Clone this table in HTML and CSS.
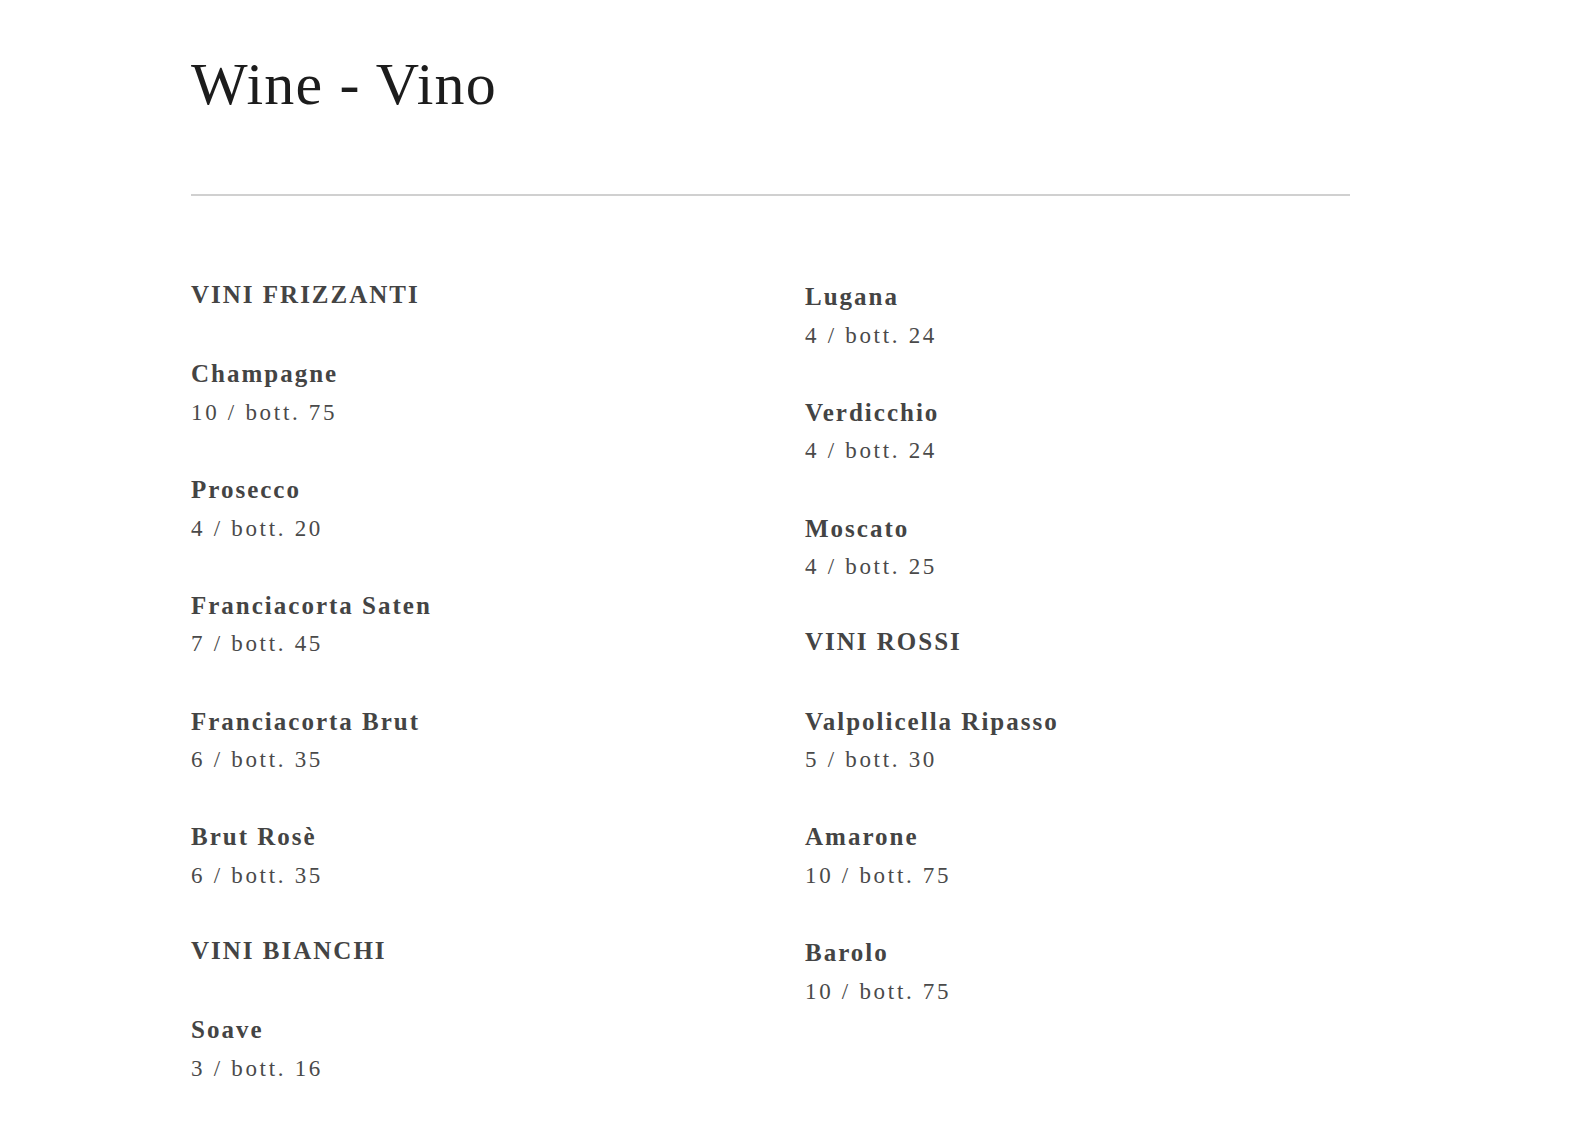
FILE: index.html
```html
<!DOCTYPE html>
<html lang="it">
<head>
<meta charset="utf-8">
<title>Wine - Vino</title>
<link rel="stylesheet" href="styles.css">
</head>
<body>
<main class="menu">
  <h1 class="title">Wine - Vino</h1>
  <hr class="divider">
  <div class="columns">
    <div class="col">
      <h2 class="section">VINI FRIZZANTI</h2>
      <div class="item"><div class="name">Champagne</div><div class="price">10 / bott. 75</div></div>
      <div class="item"><div class="name">Prosecco</div><div class="price">4 / bott. 20</div></div>
      <div class="item"><div class="name">Franciacorta Saten</div><div class="price">7 / bott. 45</div></div>
      <div class="item"><div class="name">Franciacorta Brut</div><div class="price">6 / bott. 35</div></div>
      <div class="item"><div class="name">Brut Rosè</div><div class="price">6 / bott. 35</div></div>
      <h2 class="section">VINI BIANCHI</h2>
      <div class="item"><div class="name">Soave</div><div class="price">3 / bott. 16</div></div>
    </div>
    <div class="col">
      <div class="item"><div class="name">Lugana</div><div class="price">4 / bott. 24</div></div>
      <div class="item"><div class="name">Verdicchio</div><div class="price">4 / bott. 24</div></div>
      <div class="item"><div class="name">Moscato</div><div class="price">4 / bott. 25</div></div>
      <h2 class="section">VINI ROSSI</h2>
      <div class="item"><div class="name">Valpolicella Ripasso</div><div class="price">5 / bott. 30</div></div>
      <div class="item"><div class="name">Amarone</div><div class="price">10 / bott. 75</div></div>
      <div class="item"><div class="name">Barolo</div><div class="price">10 / bott. 75</div></div>
    </div>
  </div>
</main>
</body>
</html>
```

FILE: styles.css
```css
html, body {
  margin: 0;
  padding: 0;
  background: #ffffff;
}

body {
  font-family: "Liberation Serif", "Times New Roman", serif;
  color: #444444;
}

.menu {
  width: 1159px;
  margin-left: 191px;
  padding-top: 48px;
}

.title {
  margin: 0;
  font-weight: normal;
  font-size: 60px;
  line-height: 72px;
  color: #1c1c1c;
  letter-spacing: 1.2px;
}

.divider {
  margin: 74px 0 0 0;
  border: 0;
  height: 2px;
  background: #d0d0d0;
}

.columns {
  display: grid;
  grid-template-columns: 545px 545px;
  column-gap: 69px;
  margin-top: 80px;
}

.col {
  display: flex;
  flex-direction: column;
}

.section {
  margin: 0 0 38.6px 0;
  font-size: 25px;
  line-height: 38.6px;
  font-weight: bold;
  letter-spacing: 2px;
  color: #444444;
}

.item {
  padding-top: 2px;
  margin-bottom: 36.6px;
}

.name {
  font-size: 25px;
  line-height: 38.6px;
  font-weight: bold;
  letter-spacing: 2px;
  color: #444444;
}

.price {
  font-size: 23px;
  line-height: 38.6px;
  letter-spacing: 2.7px;
  color: #4a4a4a;
}
```
